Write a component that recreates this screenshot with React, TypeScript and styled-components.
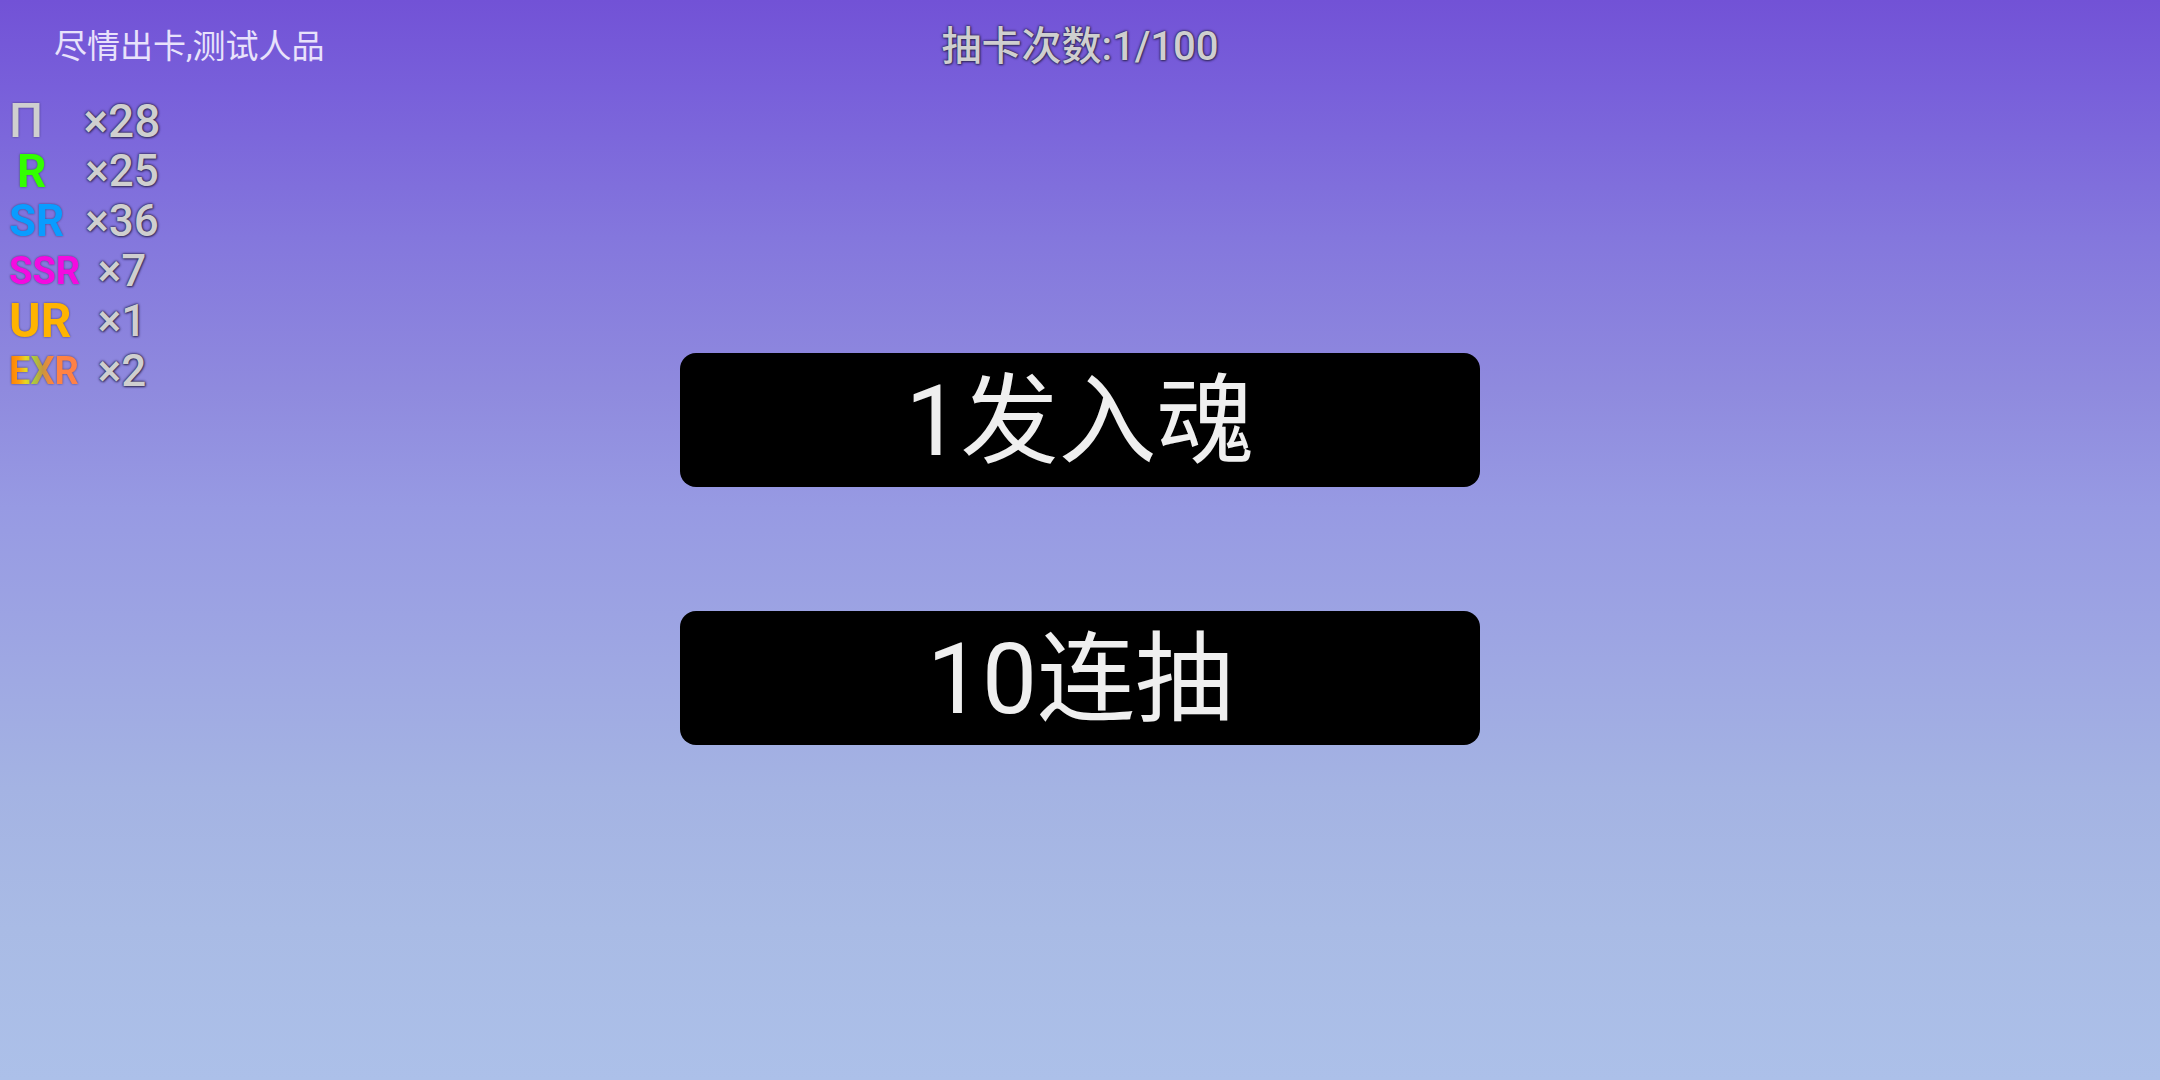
import React, { useState } from "react";
import styled, { createGlobalStyle, css } from "styled-components";

const GlobalStyle = createGlobalStyle`
  *, *::before, *::after { box-sizing: border-box; }
  body {
    margin: 0;
    font-family: Roboto, "Noto Sans CJK SC", sans-serif;
  }
`;

const outline = css`
  text-shadow: 0 0 2px #2c2450, 0 0 3px #2c2450, 1px 1px 2px #2c245099;
`;

const Screen = styled.div`
  min-height: 100vh;
  display: flex;
  flex-direction: column;
  background: linear-gradient(
    #7252d6 0%,
    #785fda 8%,
    #8477dd 22%,
    #8f8ade 36%,
    #979ae3 47%,
    #9da5e3 59%,
    #a4b3e3 73%,
    #a9bbe5 86%,
    #acc0e9 100%
  );
`;

const Header = styled.header`
  display: grid;
  grid-template-columns: 1fr auto 1fr;
  align-items: center;
  height: 96px;
  padding-bottom: 2px;
`;

const Hint = styled.p`
  margin: 0;
  padding-left: 54px;
  font-size: 33px;
  line-height: 48px;
  color: #e8e2fb;
`;

const Title = styled.h1`
  margin: 0;
  font-size: 40px;
  line-height: 48px;
  font-weight: 500;
  color: #cfcfcf;
  ${outline}
`;

const Body = styled.main`
  display: grid;
  grid-template-columns: 1fr minmax(0, 800px) 1fr;
`;

const Tally = styled.ul`
  margin: 0;
  padding: 0 0 0 9px;
  list-style: none;
`;

const TallyRow = styled.li`
  display: grid;
  grid-template-columns: 72px 82px;
  align-items: center;
  height: 50px;
`;

const Rarity = styled.span<{ $fill: string; $size: number; $inset?: boolean; $light?: boolean }>`
  justify-self: start;
  padding-left: ${(p) => (p.$inset ? "8px" : "0")};
  font-size: ${(p) => p.$size}px;
  line-height: 50px;
  font-weight: ${(p) => (p.$light ? 500 : 700)};
  color: transparent;
  background: ${(p) => p.$fill};
  background-clip: text;
  -webkit-background-clip: text;
  filter: drop-shadow(0 0 1px #2c2450aa);
`;

const Count = styled.span<{ $large?: boolean }>`
  text-align: center;
  font-size: ${(p) => (p.$large ? 46 : 44)}px;
  line-height: 50px;
  font-weight: 500;
  color: #cfcfcf;
  ${outline}
`;

const Actions = styled.div`
  display: flex;
  flex-direction: column;
  gap: 124px;
  padding-top: 257px;
`;

const DrawButton = styled.button`
  height: 134px;
  padding: 4px 0 0;
  border: 0;
  border-radius: 16px;
  background: #000;
  color: #efefef;
  font-family: inherit;
  font-size: 98px;
  line-height: 124px;
  cursor: pointer;
`;

const tally = [
  { name: "П", fill: "linear-gradient(#cfcfcf, #cfcfcf)", size: 48, count: 28, large: true, light: true },
  { name: "R", fill: "linear-gradient(#33ff00, #33ff00)", size: 46, count: 25, inset: true },
  { name: "SR", fill: "linear-gradient(#0a9cff, #0a9cff)", size: 44, count: 36 },
  { name: "SSR", fill: "linear-gradient(#f40be0, #f40be0)", size: 38, count: 7 },
  { name: "UR", fill: "linear-gradient(#ffb400, #ffb400)", size: 48, count: 1 },
  {
    name: "EXR",
    fill: "linear-gradient(90deg, #ff7f00 0%, #ff9a10 14%, #e6d820 24%, #a8c840 36%, #c8963c 48%, #ff8440 62%, #ff8048 100%)",
    size: 38,
    count: 2,
  },
];

export default function App() {
  const [draws, setDraws] = useState(1);
  const draw = (n: number) => setDraws((d) => Math.min(100, d + n));

  return (
    <Screen>
      <GlobalStyle />
      <Header>
        <Hint>尽情出卡,测试人品</Hint>
        <Title>{`抽卡次数:${draws}/100`}</Title>
      </Header>
      <Body>
        <Tally>
          {tally.map((t) => (
            <TallyRow key={t.name}>
              <Rarity $fill={t.fill} $size={t.size} $inset={t.inset} $light={t.light}>
                {t.name}
              </Rarity>
              <Count $large={t.large}>{`×${t.count}`}</Count>
            </TallyRow>
          ))}
        </Tally>
        <Actions>
          <DrawButton type="button" onClick={() => draw(1)}>1发入魂</DrawButton>
          <DrawButton type="button" onClick={() => draw(10)}>10连抽</DrawButton>
        </Actions>
      </Body>
    </Screen>
  );
}
